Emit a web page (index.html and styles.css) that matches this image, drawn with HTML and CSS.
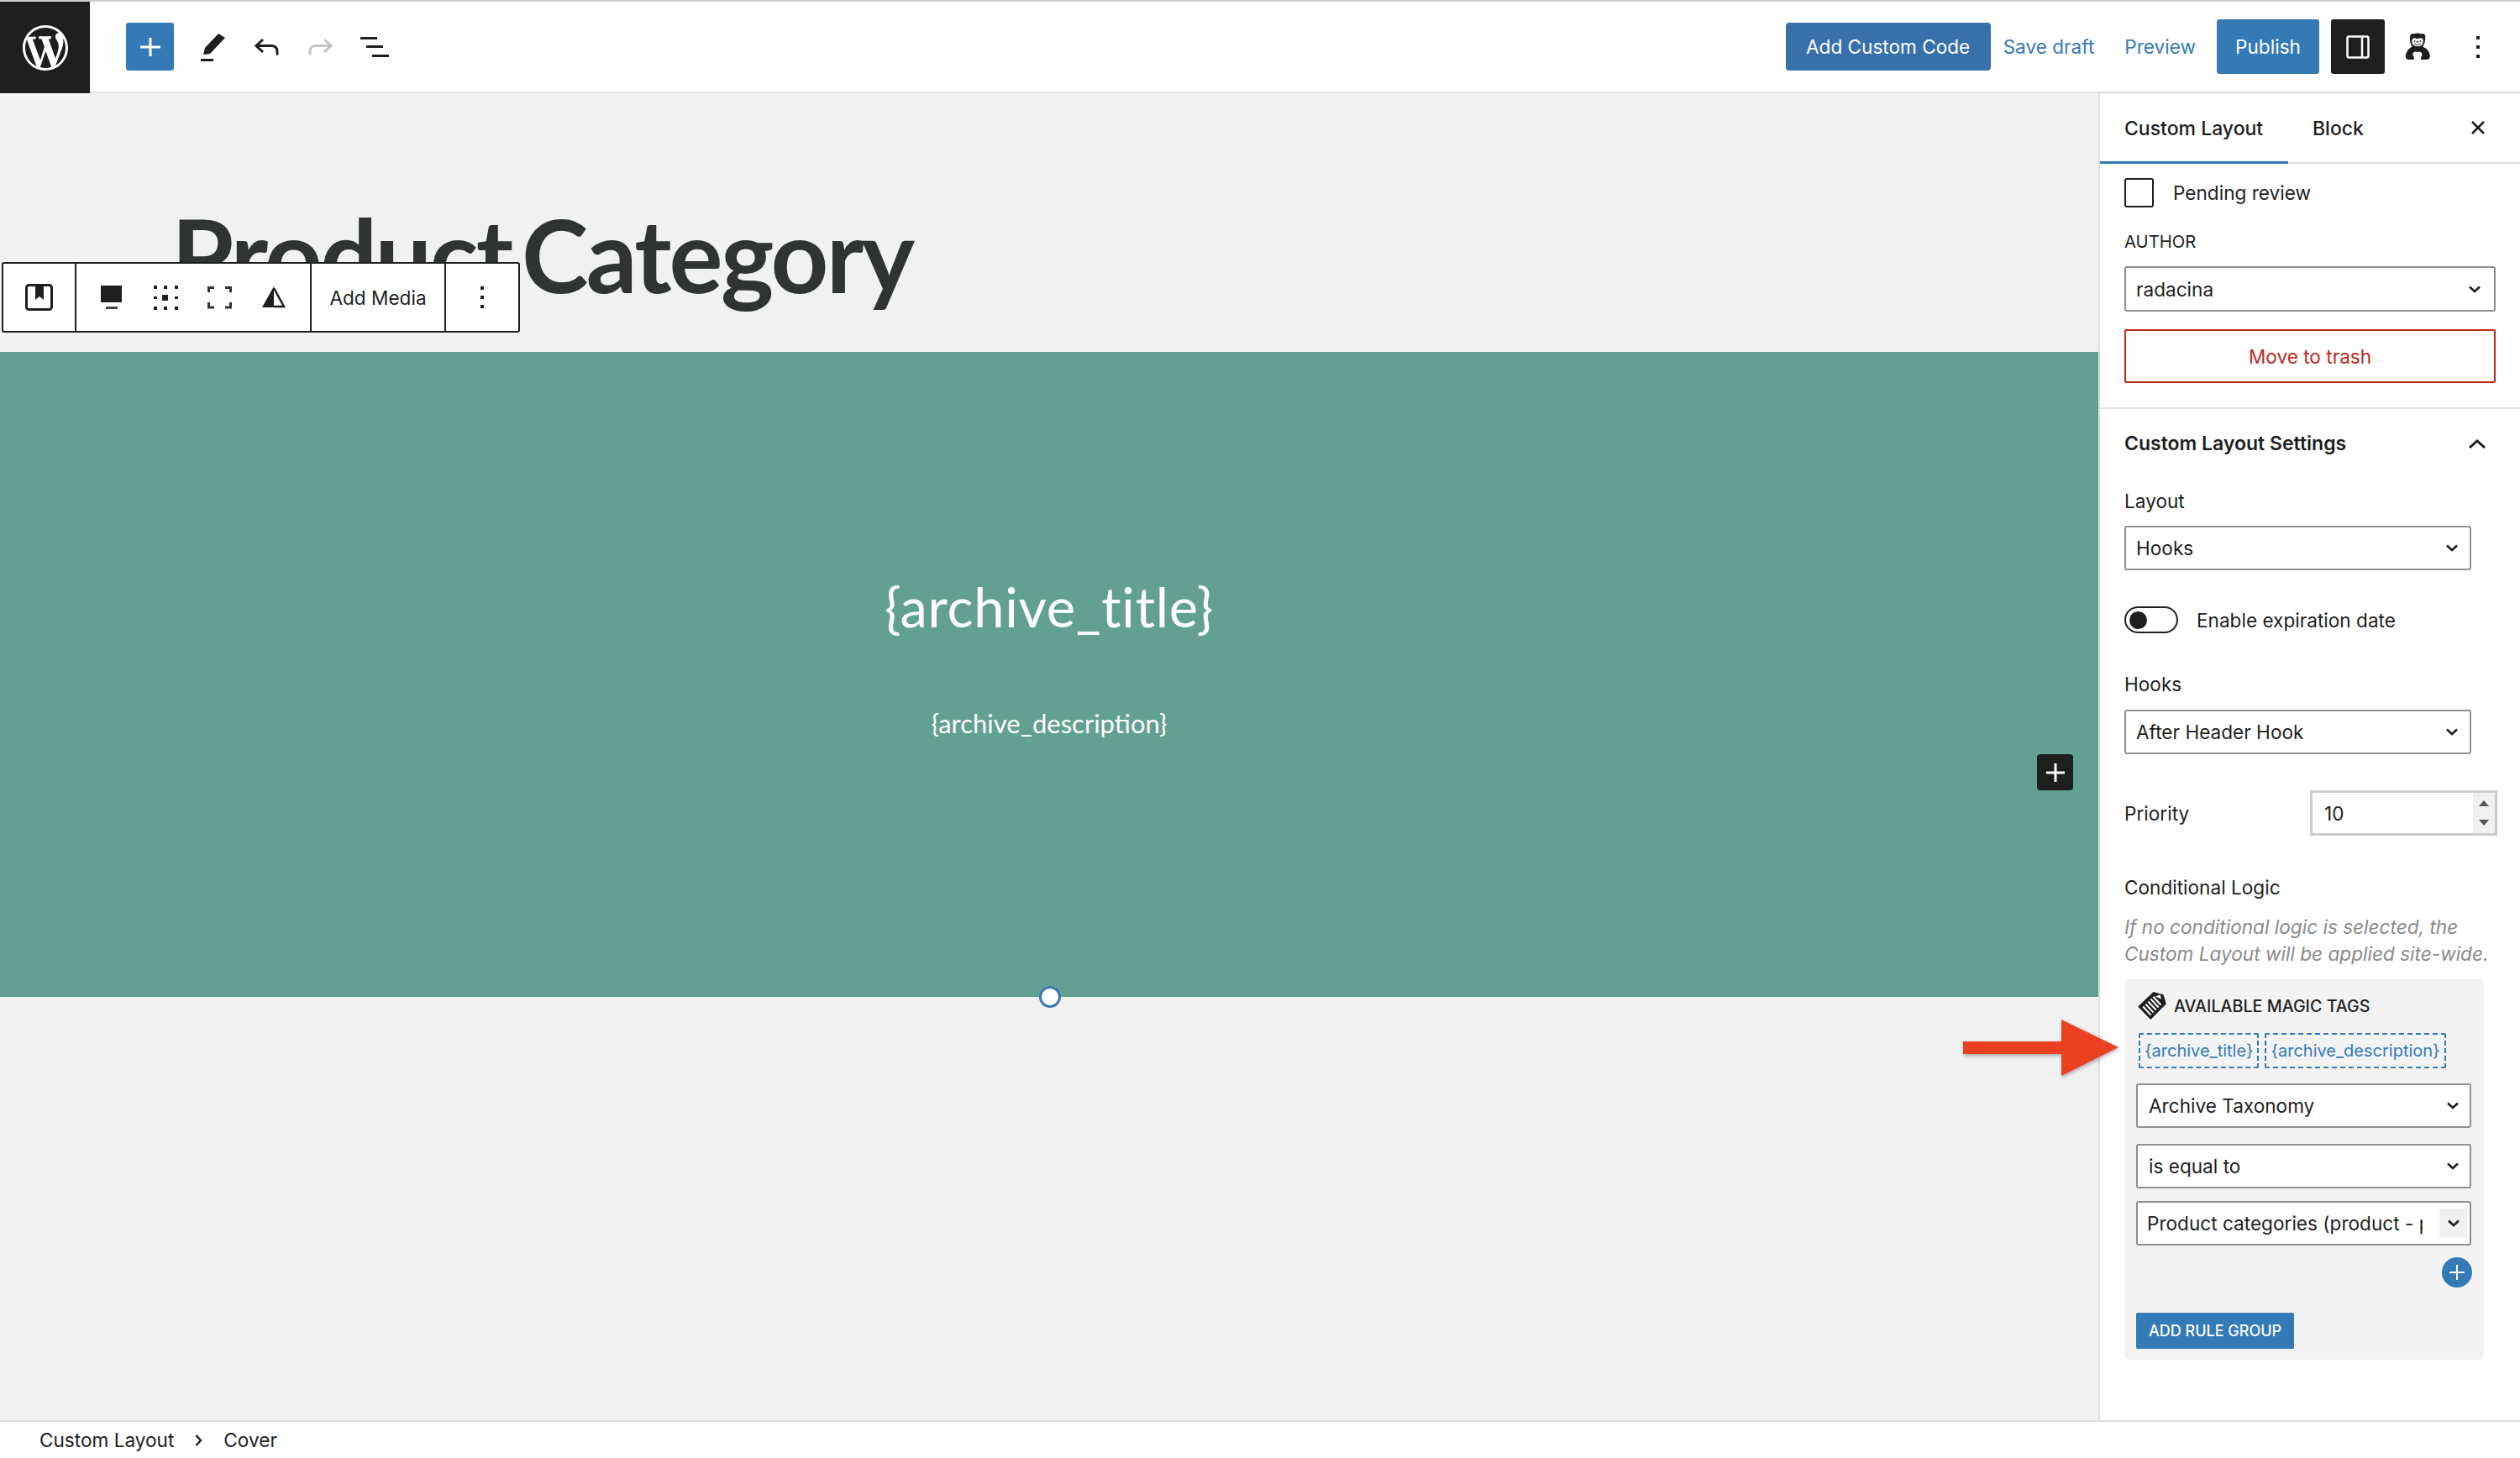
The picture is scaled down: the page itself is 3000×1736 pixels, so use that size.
FILE: index.html
```html
<!DOCTYPE html>
<html lang="en">
<head>
  <meta charset="UTF-8">
  <title>Custom Layout</title>
  <link rel="stylesheet" href="styles.css">
</head>
<body>

  <header class="topbar">
    <div class="logo">
      <svg width="54" height="54" viewBox="0 0 20 20" fill="#fff"><path d="M20 10c0-5.51-4.49-10-10-10C4.48 0 0 4.49 0 10c0 5.52 4.48 10 10 10 5.51 0 10-4.48 10-10zM7.78 15.37L4.37 6.22c.55-.02 1.17-.08 1.17-.08.5-.06.44-1.13-.06-1.11 0 0-1.45.11-2.37.11-.18 0-.37 0-.58-.01C4.12 2.69 6.87 1.11 10 1.11c2.33 0 4.45.87 6.05 2.34-.68-.11-1.65.39-1.65 1.58 0 .74.45 1.36.9 2.1.35.61.55 1.36.55 2.46 0 1.49-1.4 5-1.4 5l-3.03-8.37c.54-.02.82-.17.82-.17.5-.05.44-1.25-.06-1.22 0 0-1.44.12-2.38.12-.87 0-2.33-.12-2.33-.12-.5-.03-.56 1.2-.06 1.22l.92.08 1.26 3.41zM17.41 10c.24-.64.74-1.87.43-4.25.7 1.29 1.05 2.71 1.05 4.25 0 3.29-1.73 6.24-4.4 7.78.97-2.59 1.94-5.2 2.92-7.78zM6.1 18.09C3.12 16.65 1.11 13.53 1.11 10c0-1.3.23-2.48.72-3.59C3.25 10.3 4.67 14.2 6.1 18.09zm4.03-6.63l2.58 6.98c-.86.29-1.76.45-2.71.45-.79 0-1.57-.11-2.29-.33.81-2.38 1.62-4.74 2.42-7.1z"/></svg>
    </div>
    <button class="inserter">
      <svg width="24" height="22" viewBox="0 0 24 22" stroke="#fff" stroke-width="3"><path d="M12 0v22M0 11h24"/></svg>
    </button>
    <svg class="icon-pen" width="32" height="36" viewBox="0 0 32 36" fill="#1e1e1e"><path d="M22 2l8 5-18 19-8 1 2-8z"/><rect x="1" y="32" width="15" height="3"/></svg>
    <svg class="icon-undo" width="29" height="21" viewBox="0 0 29 21" fill="none" stroke="#1e1e1e" stroke-width="3"><path d="M10 2L2 9.500l8 7.500M2 9.500h18q7 0 7 7v4"/></svg>
    <svg class="icon-redo" width="29" height="21" viewBox="0 0 29 21" fill="none" stroke="#c4c4c4" stroke-width="3"><path d="M19 2l8 7.500-8 7.500M27 9.500H9q-7 0-7 7v4"/></svg>
    <svg class="icon-list" width="34" height="24" viewBox="0 0 34 24" fill="#1e1e1e"><rect x="0" y="0" width="20" height="3"/><rect x="7" y="10" width="20" height="3"/><rect x="14" y="21" width="20" height="3"/></svg>

    <div class="topbar-right">
      <button class="btn-code">Add Custom Code</button>
      <a class="link-draft">Save draft</a>
      <a class="link-preview">Preview</a>
      <button class="btn-publish">Publish</button>
      <button class="btn-panel">
        <svg width="28" height="28" viewBox="0 0 28 28" fill="none" stroke="#fff" stroke-width="2.500"><rect x="1.500" y="1.500" width="25" height="25" rx="2"/><path d="M19 1.500v25"/></svg>
      </button>
      <svg class="avatar" width="33" height="35" viewBox="272 50 110 112">
        <path fill="#1e1e1e" d="M296 62Q300 52 312 55 325 50 340 55 352 52 356 62 358 90 346 106 372 118 375 142 376 158 360 158L292 158Q276 158 278 142 282 118 304 106 292 90 296 62Z"/>
        <path fill="#fff" d="M307 132Q314 122 325 128 336 122 342 132 346 142 338 150L340 160H310L312 150Q304 142 307 132Z"/>
        <path fill="#fff" d="M303 84Q303 72 314 72L325 76 336 72Q348 72 348 84 348 104 325 104 303 104 303 84Z"/>
        <circle fill="#1e1e1e" cx="314" cy="84" r="3"/>
        <circle fill="#1e1e1e" cx="337" cy="84" r="3"/>
        <path fill="#1e1e1e" d="M319 84h12l-6 7z"/>
        <path fill="none" stroke="#1e1e1e" stroke-width="3" d="M312 95q13 6 26 0"/>
      </svg>
      <svg class="dots-top" width="6" height="26" viewBox="0 0 6 26" fill="#1e1e1e"><rect x="1" y="0" width="4" height="4"/><rect x="1" y="11" width="4" height="4"/><rect x="1" y="22" width="4" height="4"/></svg>
    </div>
  </header>

  <main class="main">
    <section class="canvas">
      <div class="title-wrap">
        <h1 class="post-title">Product Category</h1>
      </div>

      <!-- block toolbar sits over the title -->
      <div class="block-toolbar">
        <div class="tool-group tool-first">
          <svg width="33" height="32" viewBox="0 0 33 32"><rect x="1.500" y="1.500" width="30" height="29" rx="3" fill="none" stroke="#1e1e1e" stroke-width="3"/><path fill="#1e1e1e" d="M12 2h10v17l-5-4-5 4z"/></svg>
        </div>
        <div class="tool-group tool-icons">
          <svg width="29" height="29" viewBox="0 0 29 29" fill="#1e1e1e"><rect x="1" y="0" width="25" height="20"/><rect x="7" y="25" width="14" height="3" fill="#444"/></svg>
          <svg width="29" height="29" viewBox="0 0 29 29" fill="#1e1e1e"><rect x="0" y="0" width="4" height="4"/><rect x="12" y="0" width="4" height="4"/><rect x="25" y="0" width="4" height="4"/><rect x="0" y="13" width="4" height="3"/><rect x="10" y="11" width="7" height="7"/><rect x="25" y="13" width="4" height="3"/><rect x="0" y="25" width="4" height="4"/><rect x="12" y="25" width="4" height="4"/><rect x="25" y="25" width="4" height="4"/></svg>
          <svg width="29" height="29" viewBox="0 0 29 29" fill="none" stroke="#333" stroke-width="3"><path d="M1.500 8V2.500H8M21 2.500h6.500V8M1.500 20v6h6.500M21 26h6.500v-6"/></svg>
          <svg width="29" height="29" viewBox="0 0 29 29"><path fill="#1e1e1e" d="M15 1L1 26h14z"/><path fill="none" stroke="#1e1e1e" stroke-width="2.500" d="M15 3l12 22H15"/></svg>
        </div>
        <div class="tool-group tool-text">Add Media</div>
        <div class="tool-group tool-last">
          <svg width="6" height="26" viewBox="0 0 6 26" fill="#1e1e1e"><rect x="1" y="0" width="4" height="4"/><rect x="1" y="11" width="4" height="4"/><rect x="1" y="22" width="4" height="4"/></svg>
        </div>
      </div>

      <div class="cover">
        <div class="cover-title">{archive_title}</div>
        <div class="cover-desc">{archive_description}</div>
        <button class="cover-add">
          <svg width="22" height="22" viewBox="0 0 22 22" stroke="#fff" stroke-width="3"><path d="M11 0v22M0 11h22"/></svg>
        </button>
        <span class="cover-handle"></span>
      </div>
    </section>

    <aside class="sidebar">
      <div class="tabs">
        <div class="tab tab-active">Custom Layout</div>
        <div class="tab">Block</div>
        <svg class="tab-close" width="16" height="16" viewBox="0 0 16 16" stroke="#1e1e1e" stroke-width="2.500"><path d="M1 1l14 14M15 1L1 15"/></svg>
      </div>

      <div class="panel panel-status">
        <label class="check-row"><span class="checkbox"></span>Pending review</label>
        <div class="author-label">AUTHOR</div>
        <div class="select select-author">
          <span>radacina</span>
          <svg class="chev" width="14" height="9" viewBox="0 0 14 9" fill="none" stroke="#1e1e1e" stroke-width="2.500"><path d="M1 1.500l6 5.500 6-5.500"/></svg>
        </div>
        <button class="btn-trash">Move to trash</button>
      </div>

      <div class="panel panel-settings">
        <div class="panel-head">
          <span>Custom Layout Settings</span>
          <svg width="20" height="11" viewBox="0 0 20 11" fill="none" stroke="#1e1e1e" stroke-width="3"><path d="M1 10l9-8 9 8"/></svg>
        </div>

        <div class="field-label field-layout">Layout</div>
        <div class="select select-field">
          <span>Hooks</span>
          <svg class="chev" width="14" height="9" viewBox="0 0 14 9" fill="none" stroke="#1e1e1e" stroke-width="2.500"><path d="M1 1.500l6 5.500 6-5.500"/></svg>
        </div>

        <div class="toggle-row">
          <span class="toggle"><span class="knob"></span></span>
          Enable expiration date
        </div>

        <div class="field-label field-hooks">Hooks</div>
        <div class="select select-field select-hook">
          <span>After Header Hook</span>
          <svg class="chev" width="14" height="9" viewBox="0 0 14 9" fill="none" stroke="#1e1e1e" stroke-width="2.500"><path d="M1 1.500l6 5.500 6-5.500"/></svg>
        </div>

        <div class="priority-row">
          <span>Priority</span>
          <div class="number-input">
            <span class="number-value">10</span>
            <span class="spinner">
              <svg width="12" height="7" viewBox="0 0 12 7" fill="#555"><path d="M6 0l6 7H0z"/></svg>
              <svg width="12" height="7" viewBox="0 0 12 7" fill="#555"><path d="M6 7l6-7H0z"/></svg>
            </span>
          </div>
        </div>

        <div class="field-label field-logic">Conditional Logic</div>
        <p class="help">If no conditional logic is selected, the Custom Layout will be applied site-wide.</p>

        <div class="logic-box">
          <div class="magic-head">
            <svg width="34" height="33" viewBox="30 20 100 98"><path fill="#1e1e1e" d="M30 72l55-52 35 10 10 32-55 56z"/><path fill="none" stroke="#fff" stroke-width="6" d="M48 72l28 30M57 63l28 30M66 54l28 30M75 45l28 30M84 37l27 29"/><path fill="#fff" d="M92 36l16-6 5 16z"/></svg>
            <span>AVAILABLE MAGIC TAGS</span>
          </div>
          <div class="magic-tags">
            <span class="magic-tag">{archive_title}</span>
            <span class="magic-tag">{archive_description}</span>
          </div>
          <div class="select select-rule select-taxonomy">
            <span>Archive Taxonomy</span>
            <svg class="chev" width="14" height="9" viewBox="0 0 14 9" fill="none" stroke="#1e1e1e" stroke-width="2.500"><path d="M1 1.500l6 5.500 6-5.500"/></svg>
          </div>
          <div class="select select-rule select-equal">
            <span>is equal to</span>
            <svg class="chev" width="14" height="9" viewBox="0 0 14 9" fill="none" stroke="#1e1e1e" stroke-width="2.500"><path d="M1 1.500l6 5.500 6-5.500"/></svg>
          </div>
          <div class="select select-rule select-product">
            <span class="clipped">Product categories (product - product_cat)</span>
            <span class="select-arrow">
              <svg width="14" height="9" viewBox="0 0 14 9" fill="none" stroke="#1e1e1e" stroke-width="2.500"><path d="M1 1.500l6 5.500 6-5.500"/></svg>
            </span>
          </div>
          <div class="add-rule-row">
            <span class="add-rule">
              <svg width="18" height="18" viewBox="0 0 18 18" stroke="#fff" stroke-width="2"><path d="M9 0v18M0 9h18"/></svg>
            </span>
          </div>
          <button class="btn-group">ADD RULE GROUP</button>
        </div>
      </div>
    </aside>
  </main>

  <footer class="breadcrumb">
    <span>Custom Layout</span>
    <svg width="9" height="14" viewBox="0 0 9 14" fill="none" stroke="#1e1e1e" stroke-width="2.500"><path d="M1.500 1l5.500 6-5.500 6"/></svg>
    <span>Cover</span>
  </footer>

  <!-- annotation drawn on top of the screenshot -->
  <svg class="red-arrow" width="185" height="67" viewBox="0 0 185 67" fill="#ec4023"><path d="M0 26h117V0l68 33-68 34V41H0z"/></svg>

</body>
</html>
```

FILE: styles.css
```css
* {
  box-sizing: border-box;
}
html, body {
  margin: 0;
  height: 100%;
}
body {
  font-family: Inter, "Liberation Sans", sans-serif;
  font-size: 22.6px;
  color: #1e1e1e;
  background: #fff;
  display: flex;
  flex-direction: column;
  height: 1736px;
  overflow: hidden;
  position: relative;
}
button {
  font-family: inherit;
  font-size: inherit;
  border: none;
  padding: 0;
  cursor: pointer;
}

/* top bar */
.topbar {
  height: 111px;
  flex: none;
  display: flex;
  align-items: center;
  border-top: 2px solid #ccc;
  border-bottom: 2px solid #e0e0e0;
  background: #fff;
}
.logo {
  width: 107px;
  height: 109px;
  margin-bottom: -2px;
  background: #1e1e1e;
  display: flex;
  align-items: center;
  justify-content: center;
}
.inserter {
  width: 57px;
  height: 57px;
  margin-left: 43px;
  background: #337ab7;
  border-radius: 3px;
  display: flex;
  align-items: center;
  justify-content: center;
}
.icon-pen { margin-left: 31px; }
.icon-undo { margin-left: 33px; }
.icon-redo { margin-left: 35px; }
.icon-list { margin-left: 33px; }
.topbar-right {
  margin-left: auto;
  display: flex;
  align-items: center;
  padding-right: 47px;
}
.btn-code {
  width: 244px;
  height: 57px;
  background: #3870ab;
  color: #fff;
  border-radius: 4px;
}
.link-draft, .link-preview {
  color: #337ab7;
}
.link-draft { margin-left: 15px; }
.link-preview { margin-left: 36px; }
.btn-publish {
  width: 122px;
  height: 65px;
  margin-left: 25px;
  background: #337ab7;
  color: #fff;
  border-radius: 3px;
}
.btn-panel {
  width: 64px;
  height: 65px;
  margin-left: 14px;
  background: #1e1e1e;
  border-radius: 3px;
  display: flex;
  align-items: center;
  justify-content: center;
}
.avatar { margin-left: 23px; }
.dots-top { margin-left: 52px; }

/* main area */
.main {
  flex: 1;
  display: flex;
  min-height: 0;
}
.canvas {
  flex: 1;
  background: #f1f1f1;
  position: relative;
}
.title-wrap {
  height: 308px;
  padding: 122px 0 0 204px;
}
.post-title {
  margin: 0;
  font-family: Lato, sans-serif;
  font-size: 120px;
  font-weight: 700;
  letter-spacing: -2.7px;
  word-spacing: -14px;
  line-height: 140px;
  color: #2f3333;
}
.block-toolbar {
  position: absolute;
  left: 2px;
  top: 201px;
  width: 617px;
  height: 84px;
  display: flex;
  background: #fff;
  border: 2px solid #1e1e1e;
  border-radius: 3px;
}
.tool-group {
  display: flex;
  align-items: center;
  border-right: 2px solid #1e1e1e;
}
.tool-first {
  width: 87px;
  padding-left: 26px;
}
.tool-icons {
  width: 280px;
  padding-left: 28px;
  gap: 35px;
}
.tool-text {
  width: 160px;
  justify-content: center;
}
.tool-last {
  flex: 1;
  border-right: none;
  justify-content: center;
}

.cover {
  height: 768px;
  background: #62a191;
  color: #fff;
  text-align: center;
  font-family: Lato, sans-serif;
  padding-top: 263px;
  position: relative;
}
.cover-title {
  font-size: 65px;
  letter-spacing: 0.7px;
  line-height: 80px;
}
.cover-desc {
  font-size: 31px;
  line-height: 40px;
  margin-top: 79px;
}
.cover-add {
  position: absolute;
  left: 2425px;
  top: 479px;
  width: 43px;
  height: 43px;
  background: #1e1e1e;
  border-radius: 4px;
  display: flex;
  align-items: center;
  justify-content: center;
}
.cover-handle {
  position: absolute;
  left: 1237px;
  bottom: -13px;
  width: 26px;
  height: 26px;
  background: #fff;
  border: 3px solid #3a78b8;
  border-radius: 50%;
}

/* sidebar */
.sidebar {
  width: 502px;
  flex: none;
  background: #fff;
  border-left: 2px solid #e0e0e0;
}
.tabs {
  height: 84px;
  display: flex;
  align-items: flex-start;
  border-bottom: 2px solid #e0e0e0;
}
.tab {
  height: 84px;
  line-height: 84px;
  padding-left: 29px;
  font-size: 23px;
  font-weight: 500;
}
.tab-active {
  width: 224px;
  border-bottom: 3px solid #337ab7;
}
.tab-close {
  margin-left: auto;
  margin-right: 42px;
  align-self: center;
}
.panel {
  padding-left: 29px;
  border-bottom: 2px solid #e0e0e0;
}
.panel-status {
  padding-top: 17px;
  padding-bottom: 29px;
}
.check-row {
  display: flex;
  align-items: center;
  gap: 23px;
}
.checkbox {
  width: 35px;
  height: 35px;
  border: 2px solid #1e1e1e;
  border-radius: 3px;
}
.author-label {
  margin-top: 28px;
  font-size: 20.3px;
  line-height: 26px;
}
.select {
  display: flex;
  align-items: center;
  justify-content: space-between;
  background: #fff;
  border: 2px solid #8c8f94;
  border-radius: 3px;
}
.select-author {
  width: 442px;
  height: 54px;
  margin-top: 16px;
  padding: 0 16px 0 12px;
}
.btn-trash {
  display: block;
  width: 442px;
  height: 64px;
  margin-top: 21px;
  background: #fff;
  border: 2px solid #c0281f;
  border-radius: 2px;
  color: #c0281f;
}
.panel-settings {
  padding-top: 24px;
  border-bottom: none;
}
.panel-head {
  width: 442px;
  height: 34px;
  display: flex;
  align-items: center;
  justify-content: space-between;
  padding-right: 12px;
  font-size: 23px;
  font-weight: 600;
}
.field-label {
  line-height: 34px;
}
.field-layout { margin-top: 35px; }
.field-hooks { margin-top: 44px; }
.field-logic { margin-top: 45px; }
.select-field {
  width: 413px;
  height: 53px;
  margin-top: 12px;
  padding: 0 14px 0 12px;
}
.select-hook { margin-top: 13px; }
.toggle-row {
  display: flex;
  align-items: center;
  gap: 22px;
  height: 32px;
  margin-top: 43px;
}
.toggle {
  width: 64px;
  height: 32px;
  display: flex;
  align-items: center;
  padding-left: 4px;
  border: 2px solid #1e1e1e;
  border-radius: 16px;
}
.knob {
  width: 21px;
  height: 21px;
  background: #1e1e1e;
  border-radius: 50%;
}
.priority-row {
  width: 444px;
  height: 54px;
  margin-top: 43px;
  display: flex;
  align-items: center;
  justify-content: space-between;
}
.number-input {
  width: 223px;
  height: 54px;
  display: flex;
  align-items: center;
  justify-content: space-between;
  padding-left: 14px;
  border: 3px solid #ccc;
}
.spinner {
  width: 26px;
  height: 48px;
  background: #f0f0f0;
  display: flex;
  flex-direction: column;
  align-items: center;
  justify-content: center;
  gap: 16px;
}
.help {
  width: 450px;
  margin: 14px 0 0;
  font-style: italic;
  line-height: 32px;
  color: #8a8a8a;
}
.logic-box {
  width: 428px;
  height: 453px;
  margin-top: 14px;
  padding: 15px 14px 14px;
  background: #f3f3f3;
  border-radius: 6px;
}
.magic-head {
  height: 33px;
  display: flex;
  align-items: center;
  gap: 9px;
  padding-left: 2px;
  font-size: 19.7px;
  font-weight: 500;
}
.magic-tags {
  display: flex;
  gap: 7px;
  margin-top: 16px;
  padding-left: 3px;
}
.magic-tag {
  height: 42px;
  line-height: 38px;
  padding: 0 5px;
  border: 2px dashed #337ab7;
  border-radius: 2px;
  color: #337ab7;
  font-size: 20px;
}
.select-rule {
  width: 399px;
  height: 53px;
  padding: 0 13px 0 13px;
}
.select-taxonomy { margin-top: 18px; }
.select-equal { margin-top: 19px; }
.select-product {
  margin-top: 15px;
  padding: 0 3px 0 11px;
}
.clipped {
  width: 328px;
  margin-right: auto;
  white-space: nowrap;
  overflow: hidden;
}
.select-arrow {
  width: 33px;
  height: 35px;
  background: #f0f0f0;
  display: flex;
  align-items: center;
  justify-content: center;
}
.add-rule-row {
  display: flex;
  justify-content: flex-end;
  margin-top: 14px;
}
.add-rule {
  width: 36px;
  height: 36px;
  background: #337ab7;
  border-radius: 50%;
  display: flex;
  align-items: center;
  justify-content: center;
}
.btn-group {
  display: block;
  width: 188px;
  height: 43px;
  margin-top: 30px;
  background: #337ab7;
  border-radius: 2px;
  color: #fff;
  font-size: 18px;
  font-weight: 500;
}

/* footer */
.breadcrumb {
  height: 45px;
  flex: none;
  display: flex;
  align-items: center;
  gap: 25px;
  padding-left: 47px;
  border-top: 2px solid #e0e0e0;
  background: #fff;
}

.red-arrow {
  position: absolute;
  left: 2337px;
  top: 1214px;
  filter: drop-shadow(1px 2px 2px rgba(0,0,0,0.3));
}
```
